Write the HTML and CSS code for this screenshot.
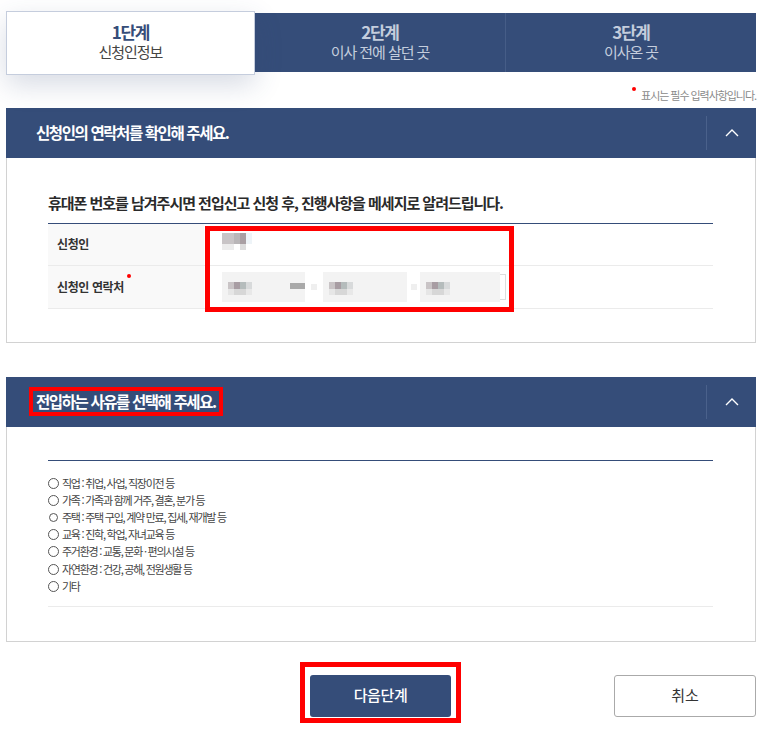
FILE: index.html
```html
<!DOCTYPE html>
<html lang="ko">
<head>
<meta charset="utf-8">
<title>전입신고</title>
<link rel="stylesheet" href="styles.css">
</head>
<body>
<div class="page">
  <ol class="steps">
    <li class="step step-active"><strong>1단계</strong><span>신청인정보</span></li>
    <li class="step"><strong>2단계</strong><span>이사 전에 살던 곳</span></li>
    <li class="step"><strong>3단계</strong><span>이사온 곳</span></li>
  </ol>
  <p class="legend"><i class="dot"></i>표시는 필수 입력사항입니다.</p>

  <section class="panel">
    <header class="panel-head">
      <h2>신청인의 연락처를 확인해 주세요.</h2>
      <button class="toggle" type="button" aria-label="접기"><svg width="14" height="8" viewBox="0 0 14 8"><path d="M1 7l6-6 6 6" fill="none" stroke="#fff" stroke-width="1.4"/></svg></button>
    </header>
    <div class="panel-body contact-body">
      <h3>휴대폰 번호를 남겨주시면 전입신고 신청 후, 진행사항을 메세지로 알려드립니다.</h3>
      <div class="form-table">
        <div class="row row-name">
          <div class="label">신청인</div>
          <div class="value"><span class="mosaic mosaic-name"></span></div>
        </div>
        <div class="row row-phone">
          <div class="label">신청인 연락처<i class="dot dot-label"></i></div>
          <div class="value phones">
            <span class="field field-a"><span class="mosaic"></span><span class="mosaic mosaic-short"></span></span>
            <span class="sep"></span>
            <span class="field field-b"><span class="mosaic"></span></span>
            <span class="sep sep-b"></span>
            <span class="field field-c"><span class="mosaic"></span></span>
            <span class="field-end"></span>
          </div>
        </div>
      </div>
      <div class="mark mark-values"></div>
    </div>
  </section>

  <section class="panel panel-second">
    <header class="panel-head">
      <h2 class="marked-title">전입하는 사유를 선택해 주세요.</h2>
      <button class="toggle" type="button" aria-label="접기"><svg width="14" height="8" viewBox="0 0 14 8"><path d="M1 7l6-6 6 6" fill="none" stroke="#fff" stroke-width="1.4"/></svg></button>
    </header>
    <div class="panel-body reason-body">
      <ul class="reasons">
        <li><i class="radio"></i>직업 : 취업, 사업, 직장이전 등</li>
        <li><i class="radio"></i>가족 : 가족과 함께 거주, 결혼, 분가 등</li>
        <li><i class="radio radio-small"></i>주택 : 주택 구입, 계약 만료, 집세, 재개발 등</li>
        <li><i class="radio"></i>교육 : 진학, 학업, 자녀교육 등</li>
        <li><i class="radio"></i>주거환경 : 교통, 문화 · 편의시설 등</li>
        <li><i class="radio"></i>자연환경 : 건강, 공해, 전원생활 등</li>
        <li><i class="radio"></i>기타</li>
      </ul>
    </div>
  </section>

  <div class="actions">
    <div class="next-wrap"><button class="btn btn-next" type="button">다음단계</button></div>
    <button class="btn btn-cancel" type="button">취소</button>
  </div>
</div>
</body>
</html>
```

FILE: styles.css
```css
* { box-sizing: border-box; }
html, body { margin: 0; padding: 0; background: #fff; }
body {
  font-family: "Noto Sans CJK KR", "Noto Sans", sans-serif;
  color: #222;
  width: 765px;
  height: 732px;
  overflow: hidden;
}
h2, h3, p, ul, ol { margin: 0; padding: 0; list-style: none; }
i { font-style: normal; }
.page { padding: 13px 9px 0 6px; }

/* steps */
.steps { display: flex; height: 59px; background: #354d79; }
.step {
  flex: 1 1 0;
  display: flex;
  flex-direction: column;
  align-items: center;
  justify-content: center;
  color: #c4cddd;
  border-left: 1px solid #465d87;
  line-height: 20px;
  padding-bottom: 2px;
}
.step strong { font-size: 17px; font-weight: 700; letter-spacing: -1.3px; }
.step span { font-size: 15px; letter-spacing: -1.05px; }
.step-active {
  flex: 0 0 249px;
  margin: -2px 0 -3px;
  background: #fff;
  color: #444;
  border: 1px solid #c5cddd;
  box-shadow: 0 10px 28px rgba(53, 77, 121, .2);
  position: relative;
  z-index: 2;
  padding-bottom: 3px;
}
.step-active strong { color: #354d79; }
.step:nth-child(2) { border-left: 0; }

.legend {
  height: 36px;
  padding-top: 15px;
  text-align: right;
  font-size: 11px;
  line-height: 17px;
  letter-spacing: -1.05px;
  color: #8a8a8a;
}
.dot {
  display: inline-block;
  width: 4px;
  height: 4px;
  border-radius: 50%;
  background: #f00;
  vertical-align: 9px;
  margin-right: 5px;
}
.dot-label { margin: 0 0 0 3px; position: relative; top: -10px; }

/* panels */
.panel-head {
  height: 50px;
  background: #354d79;
  display: flex;
  align-items: center;
  justify-content: space-between;
  padding: 8px 0 8px 30px;
}
.panel-head h2 {
  font-size: 15.5px;
  font-weight: 700;
  letter-spacing: -1.4px;
  color: #fff;
  line-height: 22px;
  margin-top: -2px;
}
.toggle {
  width: 50px;
  height: 34px;
  background: none;
  border: 0;
  border-left: 1px solid #4a618b;
  padding: 0;
  display: flex;
  align-items: center;
  justify-content: center;
}
.panel-body {
  border: 1px solid #d2d2d2;
  border-top: 0;
  padding: 0 42px 0 41px;
  position: relative;
}
.contact-body { height: 185px; padding-top: 35px; }
.contact-body h3 {
  font-size: 15px;
  font-weight: 700;
  line-height: 20px;
  letter-spacing: -1.02px;
  color: #2a2a2a;
  padding-bottom: 10px;
}
.form-table { border-top: 1px solid #354d79; }
.row { display: flex; border-bottom: 1px solid #ebebeb; }
.row-name { height: 42px; }
.row-phone { height: 43px; }
.label {
  width: 156px;
  background: #f9f9f9;
  padding: 0 0 2px 9px;
  display: flex;
  align-items: center;
  font-size: 12px;
  font-weight: 700;
  color: #333;
  letter-spacing: -.4px;
}
.value { flex: 1; padding-left: 18px; display: flex; align-items: center; position: relative; }

/* masked personal data */
.mosaic {
  display: block;
  width: 24px;
  height: 13px;
  background:
    linear-gradient(to right, #c9c4c6 0 6px, #a89da3 6px 12px, #b5bcbc 12px 18px, #d8dadb 18px) top / 100% 7px no-repeat,
    linear-gradient(to right, #e6e6e6 0 6px, #d7d7d7 6px 18px, #e8e8e8 18px) bottom / 100% 6px no-repeat;
}
.mosaic-name {
  width: 30px;
  height: 17px;
  margin-top: -6px;
  background:
    linear-gradient(to right, #c8c4c6 0 12px, #b9b6b8 12px 18px, #a99fa3 18px 24px, #eef4f8 24px) top / 100% 11px no-repeat,
    linear-gradient(to right, #ececec 0 12px, #fff 12px 18px, #dcdcdc 18px 24px, #fff 24px) bottom / 100% 6px no-repeat;
}
.mosaic-short {
  width: 15px;
  height: 6px;
  margin: 0 0 6px 38px;
  background: #a9a9a9;
}
.field {
  display: flex;
  align-items: center;
  height: 30px;
  background: #f3f3f3;
  padding: 3px 0 0 6px;
}
.field-a { width: 83px; }
.field-b { width: 84px; padding-left: 6px; }
.field-c { width: 80px; padding-left: 6px; }
.sep { width: 6px; height: 6px; margin: 0 6px; background: #efefef; }
.sep-b { margin: 0 3px 0 4px; }
.field-end {
  width: 6px;
  height: 26px;
  border: 1px solid #ddd;
  border-left: 0;
}
.mark {
  position: absolute;
  border: 5px solid #f00;
  pointer-events: none;
}
.mark-values { left: 198px; top: 68px; width: 309px; height: 86px; background: none; }

/* second panel */
.panel-second { margin-top: 34px; }
.marked-title {
  position: relative;
}
.marked-title::before {
  content: "";
  position: absolute;
  left: -7px;
  right: -7px;
  top: -3px;
  bottom: -4px;
  border: 4px solid #f00;
}
.reason-body { height: 215px; padding-top: 33px; }
.reasons {
  border-top: 1px solid #354d79;
  border-bottom: 1px solid #ebebeb;
  height: 147px;
  padding-top: 13.5px;
}
.reasons li {
  height: 17.2px;
  display: flex;
  align-items: center;
  font-size: 11px;
  line-height: 17px;
  letter-spacing: -1.25px;
  color: #444;
}
.radio {
  flex: none;
  width: 11px;
  height: 11px;
  margin-right: 3px;
  border: 1px solid #555;
  border-radius: 50%;
  background: #fff;
}
.radio-small { width: 9px; height: 9px; margin: 0 4px 0 1px; }

/* actions */
.actions {
  display: flex;
  justify-content: space-between;
  align-items: center;
  margin-top: 33px;
  padding-left: 304px;
}
.btn {
  width: 142px;
  height: 42px;
  border-radius: 3px;
  font: inherit;
  font-size: 15px;
  padding: 0 0 3px;
}
.next-wrap { position: relative; }
.next-wrap::before {
  content: "";
  position: absolute;
  left: -10px;
  right: -10px;
  top: -13px;
  bottom: -6px;
  border: 5px solid #f00;
}
.btn-next { display: block; width: 141px; background: #354d79; color: #fff; border: 0; font-weight: 500; letter-spacing: -.4px; position: relative; }
.btn-cancel { background: #fff; border: 1px solid #aaa; color: #333; }
```
